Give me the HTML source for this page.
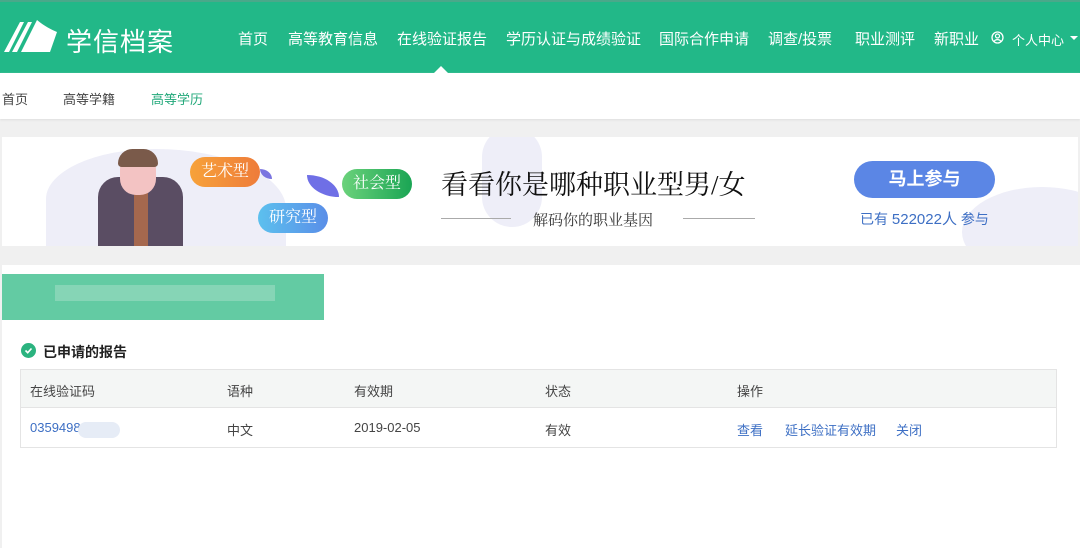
<!DOCTYPE html>
<html><head><meta charset="utf-8"><style>
*{margin:0;padding:0;box-sizing:border-box}
body{width:1080px;height:548px;overflow:hidden;background:#f0f0f0;font-family:"Liberation Sans","Noto Sans CJK SC",sans-serif;position:relative}
.a{position:absolute;white-space:nowrap}
.hd{position:absolute;left:0;top:0;width:1080px;height:73px;background:#22b888;border-top:2px solid #4aa88a}
.nav{color:#fff;font-size:15px;top:28px}
.sub{position:absolute;left:0;top:73px;width:1080px;height:46px;background:#fff;box-shadow:0 1px 2px #ddd}
.serif{font-family:"Liberation Serif","Noto Serif CJK SC",serif}
.pill{position:absolute;color:#fff;font-size:16px;border-radius:16px;text-align:center;line-height:30px;font-family:"Liberation Serif","Noto Serif CJK SC",serif}
.t{font-size:13px;color:#444}
</style></head><body>
<div class="hd"></div>
<svg class="a" style="left:2px;top:18px" width="56" height="38" viewBox="0 0 56 38"><path d="M2 34 L18 4 L22 4 L7 34Z M10 34 L26 4 L30 4 L15 34Z M19 34 L35 2 C42 8 50 12 55 14 L48 34Z" fill="#fff"/></svg>
<div class="a" style="left:66px;top:22px;color:#fff;font-size:26px;letter-spacing:1px">学信档案</div>
<div class="a nav" style="left:238px">首页</div>
<div class="a nav" style="left:288px">高等教育信息</div>
<div class="a nav" style="left:397px">在线验证报告</div>
<div class="a nav" style="left:506px">学历认证与成绩验证</div>
<div class="a nav" style="left:659px">国际合作申请</div>
<div class="a nav" style="left:768px">调查/投票</div>
<div class="a nav" style="left:855px">职业测评</div>
<div class="a nav" style="left:934px">新职业</div>
<svg class="a" style="left:991px;top:31px" width="13" height="13" viewBox="0 0 13 13"><circle cx="6.5" cy="6.5" r="5.5" fill="none" stroke="#fff" stroke-width="1.3"/><circle cx="6.5" cy="5" r="2" fill="none" stroke="#fff" stroke-width="1.2"/><path d="M3 10.5 C4.5 8 8.5 8 10 10.5" fill="none" stroke="#fff" stroke-width="1.2"/></svg>
<div class="a" style="left:1012px;top:30px;color:#fff;font-size:13px">个人中心</div>
<div class="a" style="left:1070px;top:36px;border:4px solid transparent;border-top-color:#fff"></div>
<div class="sub"></div>
<div class="a" style="left:434px;top:66px;border:7px solid transparent;border-bottom-color:#fff;border-top:0"></div>
<div class="a" style="left:2px;top:89px;font-size:13px;color:#444">首页</div>
<div class="a" style="left:63px;top:89px;font-size:13px;color:#444">高等学籍</div>
<div class="a" style="left:151px;top:89px;font-size:13px;color:#22a87a">高等学历</div>
<div class="a" style="left:2px;top:137px;width:1076px;height:109px;background:#fff;overflow:hidden">
 <div class="a" style="left:44px;top:12px;width:240px;height:110px;background:#eeeef8;border-radius:50% 60% 0 0"></div>
 <div class="a" style="left:480px;top:-10px;width:60px;height:100px;background:#eeeef8;border-radius:30px"></div>
 <div class="a" style="left:960px;top:50px;width:160px;height:90px;background:#eeeef8;border-radius:50%"></div>
 <div class="a" style="left:96px;top:40px;width:85px;height:70px;background:#5a4d63;border-radius:20px 20px 0 0"></div>
 <div class="a" style="left:132px;top:56px;width:14px;height:60px;background:#a5684e"></div>
 <div class="a" style="left:118px;top:16px;width:36px;height:42px;background:#f3c3c3;border-radius:16px"></div>
 <div class="a" style="left:116px;top:12px;width:40px;height:18px;background:#7a5a4a;border-radius:16px 16px 4px 4px"></div>
 <div class="pill" style="left:188px;top:20px;width:70px;background:linear-gradient(90deg,#f7a23a,#ee7c3a)">艺术型</div>
 <div class="pill" style="left:340px;top:32px;width:70px;background:linear-gradient(90deg,#6bd27b,#1aa554)">社会型</div>
 <div class="pill" style="left:256px;top:66px;width:70px;background:linear-gradient(90deg,#5cc0ee,#5a8ee8)">研究型</div>
 <div class="a" style="left:305px;top:38px;width:32px;height:22px;background:#6f6fe6;border-radius:0 100% 0 100%"></div>
 <div class="a" style="left:258px;top:32px;width:12px;height:10px;background:#7a74e0;border-radius:0 100% 0 100%"></div>
 <div class="a serif" style="left:439px;top:26px;font-size:27px;color:#111">看看你是哪种职业型男/女</div>
 <div class="a" style="left:439px;top:81px;width:70px;height:1px;background:#aaa"></div>
 <div class="a" style="left:681px;top:81px;width:72px;height:1px;background:#aaa"></div>
 <div class="a serif" style="left:531px;top:72px;font-size:15px;color:#333">解码你的职业基因</div>
 <div class="a" style="left:852px;top:24px;width:141px;height:37px;background:#5b86e5;border-radius:19px;color:#fff;font-size:18px;font-weight:bold;text-align:center;line-height:37px">马上参与</div>
 <div class="a" style="left:858px;top:71px;font-size:14px;color:#3d6fc4">已有 <span style="font-size:15px">522022人</span> 参与</div>
</div>
<div class="a" style="left:2px;top:265px;width:1078px;height:283px;background:#fff"></div>
<div class="a" style="left:2px;top:274px;width:322px;height:46px;background:#63cba3"></div>
<div class="a" style="left:55px;top:285px;width:220px;height:16px;background:#86d5b6"></div>
<div class="a" style="left:21px;top:343px;width:15px;height:15px;border-radius:50%;background:#2bb37f"></div>
<svg class="a" style="left:21px;top:343px" width="15" height="15"><path d="M4.5 7.5 L6.7 9.7 L10.5 5.5" fill="none" stroke="#fff" stroke-width="1.6"/></svg>
<div class="a" style="left:43px;top:342px;font-size:14px;font-weight:bold;color:#222">已申请的报告</div>
<div class="a" style="left:20px;top:369px;width:1037px;height:79px;border:1px solid #e4e4e4"></div>
<div class="a" style="left:21px;top:370px;width:1035px;height:38px;background:#f4f6f5;border-bottom:1px solid #e4e4e4"></div>
<div class="a t" style="left:30px;top:381px">在线验证码</div>
<div class="a t" style="left:227px;top:381px">语种</div>
<div class="a t" style="left:354px;top:381px">有效期</div>
<div class="a t" style="left:545px;top:381px">状态</div>
<div class="a t" style="left:737px;top:381px">操作</div>
<div class="a t" style="left:30px;top:420px;color:#3d6fc4">0359498</div>
<div class="a" style="left:78px;top:422px;width:42px;height:16px;background:#e6ecf6;border-radius:8px"></div>
<div class="a t" style="left:227px;top:420px">中文</div>
<div class="a t" style="left:354px;top:420px">2019-02-05</div>
<div class="a t" style="left:545px;top:420px">有效</div>
<div class="a t" style="left:737px;top:420px;color:#3d6fc4">查看</div>
<div class="a t" style="left:785px;top:420px;color:#3d6fc4">延长验证有效期</div>
<div class="a t" style="left:896px;top:420px;color:#3d6fc4">关闭</div>
</body></html>
